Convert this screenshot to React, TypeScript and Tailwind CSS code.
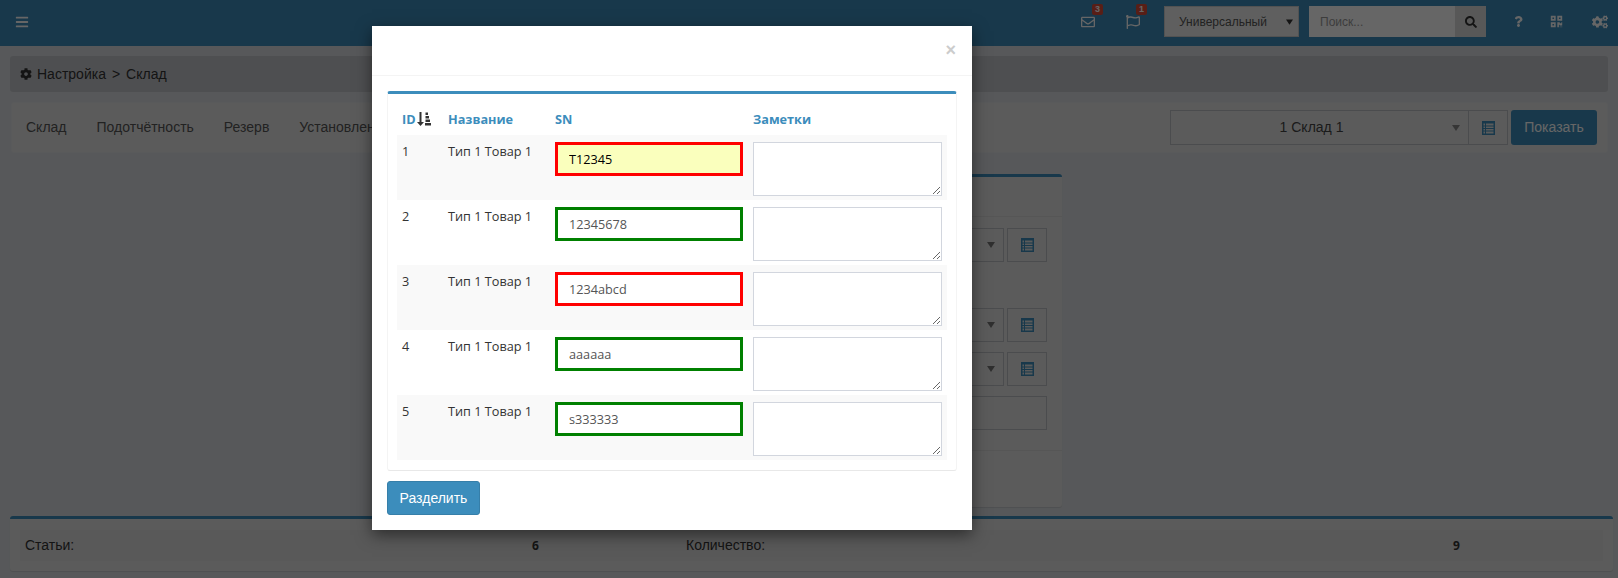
import { FaBars, FaRegEnvelope, FaRegFlag, FaSearch, FaQuestion, FaQrcode, FaCogs, FaCog } from "react-icons/fa";

const rows = [
  { id: 1, sn: "T12345", bad: true, first: true },
  { id: 2, sn: "12345678", bad: false },
  { id: 3, sn: "1234abcd", bad: true },
  { id: 4, sn: "aaaaaa", bad: false },
  { id: 5, sn: "s333333", bad: false },
];

function Caret({ className }: { className: string }) {
  return (
    <svg viewBox="0 0 8 6" className={className} fill="currentColor">
      <polygon points="0,0 8,0 4,6" />
    </svg>
  );
}

function ListIcon() {
  return (
    <svg viewBox="0 0 13 14" className="h-[14px] w-[13px]" fill="#3c8dbc">
      <path fillRule="evenodd" d="M0 0H13V14H0ZM1.5 2.5V4.5H3V2.5ZM4 2.5V4.5H11.5V2.5ZM1.5 5.5V7H3V5.5ZM4 5.5V7H11.5V5.5ZM1.5 8V9.5H3V8ZM4 8V9.5H11.5V8ZM1.5 10.5V12.5H3V10.5ZM4 10.5V12.5H11.5V10.5Z" />
    </svg>
  );
}

function SortIcon() {
  return (
    <svg viewBox="0 0 14 14" className="h-[14px] w-[14px]" fill="#333">
      <path d="M2.5 0H4.5V10H7L3.5 14L0 10H2.5Z" />
      <rect x="8.5" y="0.5" width="2.5" height="2.5" />
      <rect x="8.5" y="4" width="3.5" height="2.5" />
      <rect x="8.5" y="7.5" width="4.5" height="2.5" />
      <rect x="8" y="11" width="6" height="2.5" />
    </svg>
  );
}

function Nav({ label }: { label: string }) {
  return <span className="text-[14px] text-[#555]">{label}</span>;
}

function SelectRow() {
  return (
    <div className="flex items-center">
      <div className="flex h-[34px] flex-1 items-center justify-end border border-[#bbbec4] pr-[8px]">
        <Caret className="h-[6px] w-[8px] text-[#777]" />
      </div>
      <div className="ml-[3px] flex h-[34px] w-[40px] items-center justify-center border border-[#bbbec4]">
        <ListIcon />
      </div>
    </div>
  );
}

export default function App() {
  return (
    <div className="relative h-[578px] w-[1618px] overflow-hidden bg-[#dadde1] font-['Liberation_Sans',sans-serif] text-[14px] text-[#333]">
      <header className="flex h-[46px] items-center bg-[#3c8dbc] pb-[3px] pl-[15px] text-white">
        <FaBars className="text-[14px]" />
        <div className="ml-auto flex items-center">
          <div className="relative mr-[31px]">
            <FaRegEnvelope className="text-[14px]" />
            <span className="absolute left-[11px] top-[-11px] flex h-[11px] w-[11px] items-center justify-center rounded-[2px] bg-[#dd4b39] text-[9px] font-bold leading-none">3</span>
          </div>
          <div className="relative mr-[24px]">
            <FaRegFlag className="text-[14px]" />
            <span className="absolute left-[10px] top-[-11px] flex h-[11px] w-[11px] items-center justify-center rounded-[2px] bg-[#dd4b39] text-[9px] font-bold leading-none">1</span>
          </div>
          <div className="flex h-[31px] w-[135px] items-center border border-[#ccc] bg-[#eee] pl-[14px] text-[12px] text-[#555]">
            Универсальный
            <Caret className="ml-[19px] h-[6px] w-[7px] text-[#333]" />
          </div>
          <div className="ml-[10px] flex h-[31px] w-[177px] items-center justify-between bg-white pl-[11px] text-[12px] text-[#999]">
            Поиск...
            <span className="flex h-[31px] w-[31px] items-center justify-center bg-[#ddd] text-[#333]"><FaSearch className="text-[12px]" /></span>
          </div>
          <FaQuestion className="ml-[27px] text-[11px]" />
          <FaQrcode className="ml-[26px] text-[13px]" />
          <FaCogs className="ml-[29px] mr-[10px] text-[16px]" />
        </div>
      </header>

      <div className="mx-[10px] mt-[10px] flex h-[36px] items-center gap-[5px] rounded-[3px] bg-[#c3c6ca] pl-[10px] text-[#333]">
        <FaCog className="text-[12px]" />
        <span>Настройка</span><span className="mx-[1px]">&gt;</span><span>Склад</span>
      </div>

      <div className="ml-[11px] mr-[10px] mt-[10px] flex h-[51px] items-center rounded-[3px] border border-[#dfe1e4] bg-[#e4e4e4] pl-[14px] pr-[10px]">
        <div className="flex gap-[30px]">
          <Nav label="Склад" /><Nav label="Подотчётность" /><Nav label="Резерв" /><Nav label="Установленные" />
        </div>
        <div className="ml-auto flex items-center">
          <div className="flex h-[35px] w-[299px] items-center border border-[#bbbec4] pr-[8px]">
            <span className="flex-1 text-center text-[#444]">1 Склад 1</span>
            <Caret className="h-[6px] w-[8px] text-[#888]" />
          </div>
          <div className="flex h-[35px] w-[39px] items-center justify-center border border-l-0 border-[#bbbec4]">
            <ListIcon />
          </div>
          <div className="ml-[3px] flex h-[35px] w-[86px] items-center justify-center rounded-[3px] bg-[#3c8dbc] text-white">Показать</div>
        </div>
      </div>

      <div className="ml-[400px] mt-[21px] h-[333px] w-[662px] rounded-[3px] border-t-[3px] border-[#3c8dbc] bg-[#e4e4e4] shadow-[0_1px_1px_rgba(0,0,0,0.1)]">
        <div className="h-[40px] border-b border-[#d8d8d8]" />
        <div className="flex flex-col pl-[300px] pr-[15px] pt-[11px]">
          <SelectRow />
          <div className="mt-[46px] flex flex-col gap-[10px]">
            <SelectRow />
            <SelectRow />
            <div className="h-[34px] border border-[#bbbec4]" />
          </div>
        </div>
        <div className="mt-[20px] border-t border-[#d8d8d8]" />
      </div>

      <div className="ml-[10px] mt-[9px] h-[55px] w-[1603px] rounded-[3px] border-t-[3px] border-[#3c8dbc] bg-[#e4e4e4] px-[10px] pt-[11px] shadow-[0_1px_1px_rgba(0,0,0,0.1)]">
        <div className="flex h-[31px] items-center bg-[#dedede] pl-[5px]">
          <span className="w-[507px]">Статьи:</span>
          <b className="w-[154px] font-['Open_Sans',sans-serif] text-[12px]">6</b>
          <span className="w-[767px]">Количество:</span>
          <b className="font-['Open_Sans',sans-serif] text-[12px]">9</b>
        </div>
      </div>

      <div className="absolute inset-0 bg-black/60" />

      <div className="absolute left-[372px] top-[26px] h-[504px] w-[600px] bg-white shadow-[0_5px_15px_rgba(0,0,0,0.5)]">
        <div className="flex h-[50px] items-start justify-end border-b border-[#f4f4f4] pr-[16px] pt-[15px]">
          <span className="text-[18px] font-bold leading-[18px] text-[#ccc]">×</span>
        </div>
        <div className="mx-[15px] mt-[15px] h-[380px] rounded-[3px] border-x border-b border-t-[3px] border-x-[#f4f4f4] border-b-[#e8e8e8] border-t-[#3c8dbc]">
          <table className="ml-[9px] mt-[6px] w-[550px] table-fixed border-collapse font-['Open_Sans',sans-serif] text-[12.7px] text-[#333]">
            <thead>
              <tr className="h-[35px] text-left font-bold text-[#3c8dbc]">
                <th className="w-[41px] pl-[5px] pt-[4px]">
                  <span className="flex items-center gap-[1px]">ID<SortIcon /></span>
                </th>
                <th className="w-[109px] pl-[10px] pt-[4px]">Название</th>
                <th className="w-[198px] pl-[8px] pt-[4px]">SN</th>
                <th className="pl-[8px] pt-[4px]">Заметки</th>
              </tr>
            </thead>
            <tbody>
              {rows.map((r, i) => (
                <tr key={r.id} className={i % 2 === 0 ? "h-[65px] bg-[#f9f9f9]" : "h-[65px] bg-white"}>
                  <td className="pl-[5px] pt-[7px] align-top">{r.id}</td>
                  <td className="pl-[10px] pt-[7px] align-top">Тип 1 Товар 1</td>
                  <td className="pl-[8px] pt-[7px] align-top">
                    <input
                      readOnly
                      value={r.sn}
                      className={`block h-[34px] w-[188px] border-[3px] px-[11px] text-[12.7px] outline-none ${r.bad ? "border-[#ff0000]" : "border-[#008000]"} ${r.first ? "bg-[#faffbd] text-black" : "bg-white text-[#555]"}`}
                    />
                  </td>
                  <td className="pl-[8px] pt-[7px] align-top">
                    <textarea readOnly className="block h-[54px] w-[189px] border border-[#d2d6de] bg-white outline-none" />
                  </td>
                </tr>
              ))}
            </tbody>
          </table>
        </div>
        <button className="ml-[15px] mt-[10px] h-[34px] w-[93px] rounded-[3px] border border-[#367fa9] bg-[#3c8dbc] text-[14px] text-white">Разделить</button>
      </div>
    </div>
  );
}
